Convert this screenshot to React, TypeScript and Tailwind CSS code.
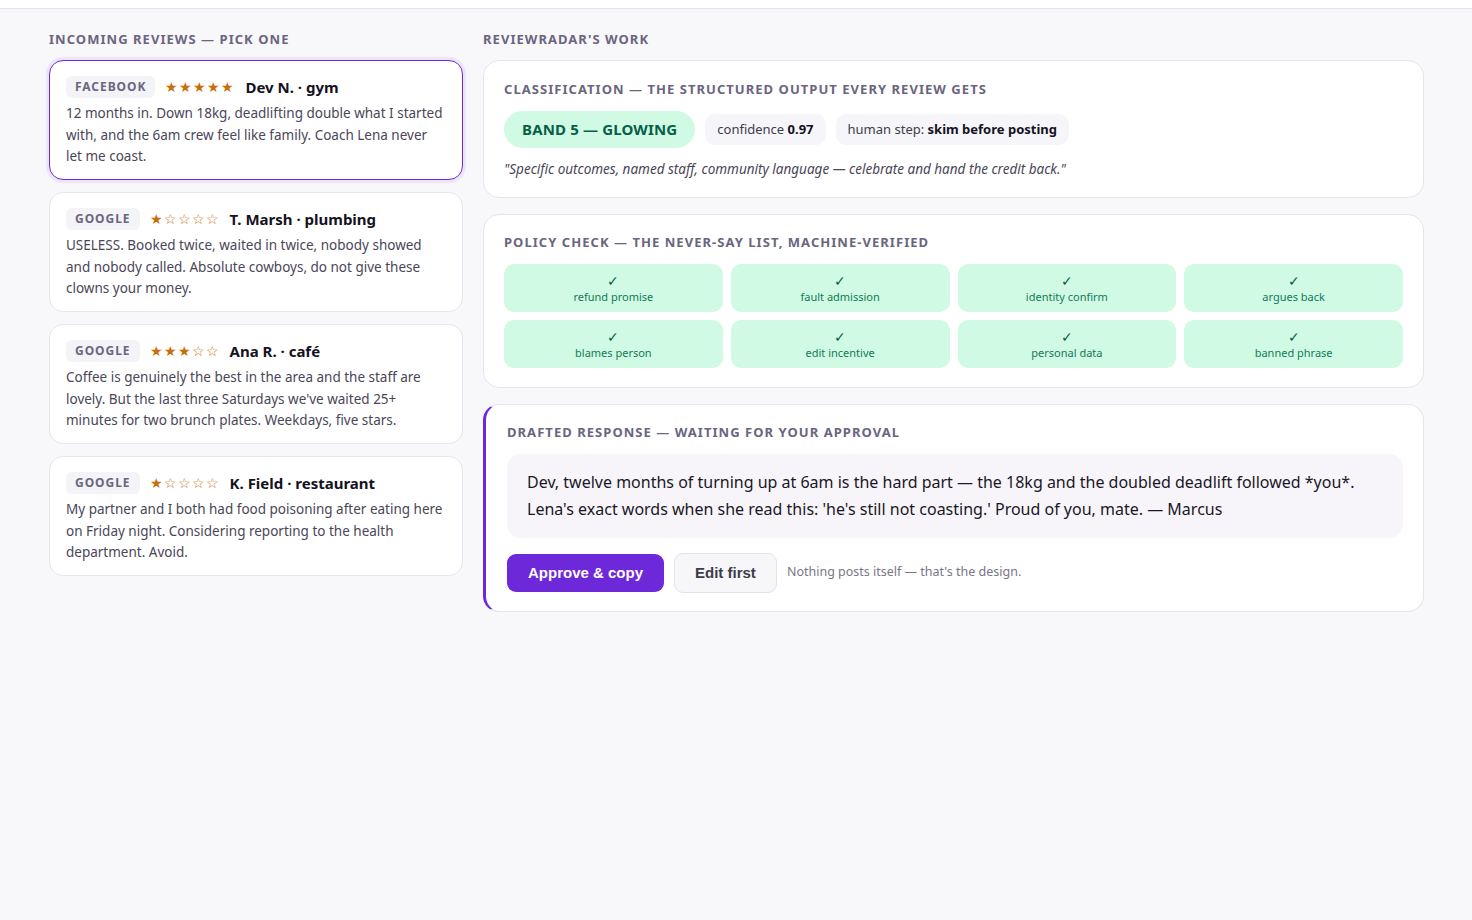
import React, { useState } from "react";

type Review = {
  source: string;
  stars: number;
  name: string;
  body: string;
};

const reviews: Review[] = [
  {
    source: "Facebook",
    stars: 5,
    name: "Dev N. · gym",
    body: "12 months in. Down 18kg, deadlifting double what I started with, and the 6am crew feel like family. Coach Lena never let me coast.",
  },
  {
    source: "Google",
    stars: 1,
    name: "T. Marsh · plumbing",
    body: "USELESS. Booked twice, waited in twice, nobody showed and nobody called. Absolute cowboys, do not give these clowns your money.",
  },
  {
    source: "Google",
    stars: 3,
    name: "Ana R. · café",
    body: "Coffee is genuinely the best in the area and the staff are lovely. But the last three Saturdays we've waited 25+ minutes for two brunch plates. Weekdays, five stars.",
  },
  {
    source: "Google",
    stars: 1,
    name: "K. Field · restaurant",
    body: "My partner and I both had food poisoning after eating here on Friday night. Considering reporting to the health department. Avoid.",
  },
];

const checks = [
  "refund promise",
  "fault admission",
  "identity confirm",
  "argues back",
  "blames person",
  "edit incentive",
  "personal data",
  "banned phrase",
];

function Stars({ n, big }: { n: number; big: boolean }) {
  return (
    <span className={`text-[#c96f0a] tracking-[1px] ${big ? "text-[14px]" : "text-[13.5px]"}`}>
      {"★".repeat(n)}
      {"☆".repeat(5 - n)}
    </span>
  );
}

function ReviewCard({ r, active, onPick }: { r: Review; active: boolean; onPick: () => void }) {
  return (
    <div
      onClick={onPick}
      className={`h-[120px] cursor-pointer rounded-[14px] border bg-white px-4 pt-[15px] ${
        active ? "border-[#6d28d9] shadow-[0_0_0_3px_rgba(109,40,217,0.08)]" : "border-[#e6e4ec]"
      }`}
    >
      <div className="flex items-center gap-[10px]">
        <span className="rounded-[6px] bg-[#f4f3f8] px-[9px] py-[2px] text-[12px] font-bold uppercase tracking-[0.08em] text-[#6b6580]">
          {r.source}
        </span>
        <Stars n={r.stars} big={r.stars === 5} />
        <span className="text-[15px] font-bold text-[#15121f]">{r.name}</span>
      </div>
      <p className="mt-[5px] text-[13.5px] leading-[21.5px] text-[#4a4658]">{r.body}</p>
    </div>
  );
}

function SectionLabel({ children }: { children: React.ReactNode }) {
  return (
    <div className="text-[13px] font-bold uppercase tracking-[0.08em] text-[#6b6580]">{children}</div>
  );
}

export default function App() {
  const [picked, setPicked] = useState(0);

  return (
    <div className="min-h-[920px] bg-[#f8f7fa] font-['Noto_Sans',sans-serif]">
      <div className="h-[9px] border-b border-[#e4e2ea] bg-white" />
      <div className="grid grid-cols-[414px_1fr] gap-5 pl-[49px] pr-12 pt-[21px]">
        {/* review inbox */}
        <div>
          <SectionLabel>Incoming reviews — pick one</SectionLabel>
          <div className="mt-[10px] flex flex-col gap-3">
            {reviews.map((r, i) => (
              <ReviewCard key={i} r={r} active={picked === i} onPick={() => setPicked(i)} />
            ))}
          </div>
        </div>

        {/* pipeline output */}
        <div>
          <SectionLabel>ReviewRadar's work</SectionLabel>
          <div className="mt-[10px] flex flex-col gap-4">
            <div className="rounded-[16px] border border-[#e6e4ec] bg-white px-5 pb-[18px] pt-[19px]">
              <SectionLabel>Classification — the structured output every review gets</SectionLabel>
              <div className="mt-[12px] flex items-center gap-[10px]">
                <span className="rounded-full bg-[#d1fae5] px-[18px] py-[7px] text-[15px] font-bold tracking-[0.01em] text-[#065f46]">
                  BAND 5 — GLOWING
                </span>
                <span className="rounded-[10px] bg-[#f6f5f9] px-3 py-[6px] text-[13px] text-[#3f3b4d]">
                  confidence <b className="text-[#15121f]">0.97</b>
                </span>
                <span className="rounded-[10px] bg-[#f6f5f9] px-3 py-[6px] text-[13px] text-[#3f3b4d]">
                  human step: <b className="text-[#15121f]">skim before posting</b>
                </span>
              </div>
              <p className="mt-[11px] text-[13.5px] italic text-[#4a4658]">
                "Specific outcomes, named staff, community language — celebrate and hand the credit back."
              </p>
            </div>

            <div className="rounded-[16px] border border-[#e6e4ec] bg-white px-5 pb-[19px] pt-[18px]">
              <SectionLabel>Policy check — the never-say list, machine-verified</SectionLabel>
              <div className="mt-[12px] grid grid-cols-4 gap-2">
                {checks.map((c) => (
                  <div
                    key={c}
                    className="flex h-12 flex-col items-center justify-center rounded-[10px] bg-[#d1fae5] text-[#0f7a57]"
                  >
                    <span className="text-[14px] leading-[17px] text-[#065f46]">✓</span>
                    <span className="text-[11px] leading-[16px]">{c}</span>
                  </div>
                ))}
              </div>
            </div>

            <div className="rounded-[16px] border border-l-[3px] border-[#e6e4ec] border-l-[#6d28d9] bg-white pb-[18px] pl-[21px] pr-5 pt-[18px]">
              <SectionLabel>Drafted response — waiting for your approval</SectionLabel>
              <div className="mt-[11px] rounded-[14px] bg-[#f7f5fa] px-5 py-[15px] text-[16px] leading-[27px] text-[#1a1727]">
                Dev, twelve months of turning up at 6am is the hard part — the 18kg and the doubled deadlift followed
                *you*. Lena's exact words when she read this: 'he's still not coasting.' Proud of you, mate. — Marcus
              </div>
              <div className="mt-[15px] flex items-center gap-[10px]">
                <button className="h-[38px] rounded-[9px] bg-[#6d28d9] px-[21px] font-['Liberation_Sans',sans-serif] text-[15px] font-bold text-white">
                  Approve &amp; copy
                </button>
                <button className="h-[40px] rounded-[9px] border border-[#e4e2ea] bg-[#f7f7f9] px-[20px] font-['Liberation_Sans',sans-serif] text-[15px] font-bold text-[#3f3b4d]">
                  Edit first
                </button>
                <span className="text-[12.5px] text-[#7a7588]">Nothing posts itself — that's the design.</span>
              </div>
            </div>
          </div>
        </div>
      </div>
    </div>
  );
}
